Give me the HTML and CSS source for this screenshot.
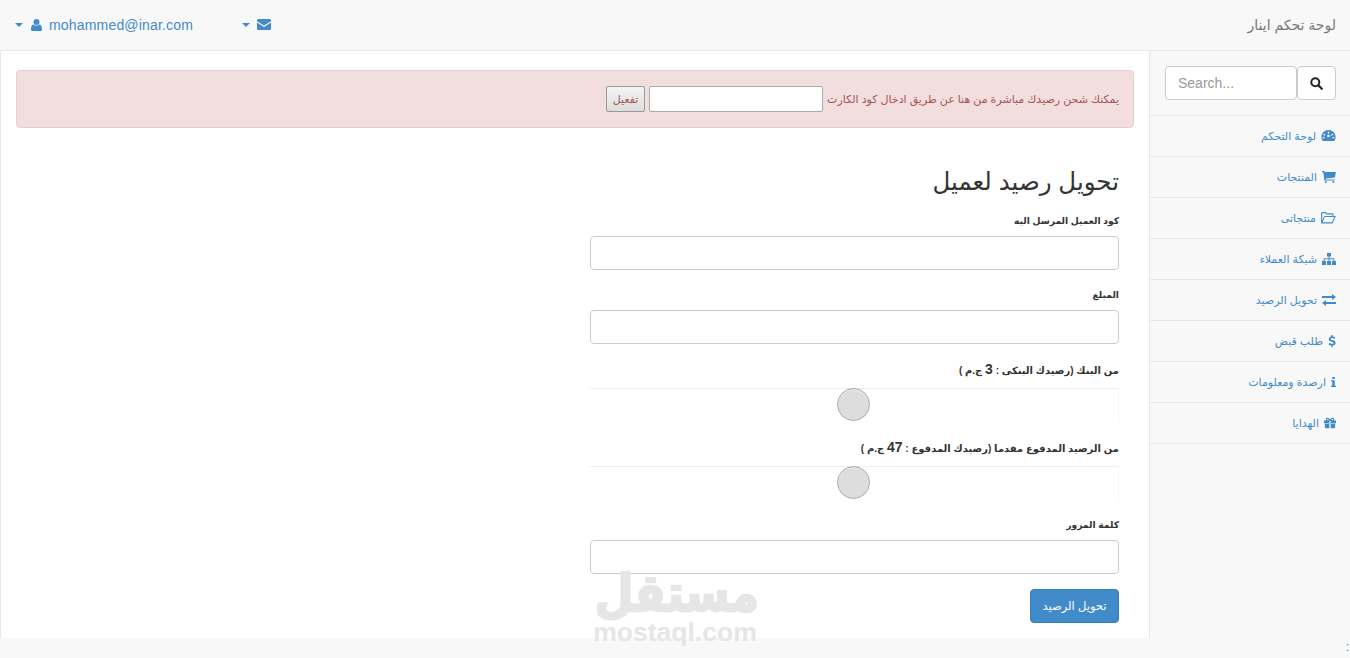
FILE: index.html

```html
<!DOCTYPE html>
<html lang="ar" dir="rtl">
<head>
  <meta charset="utf-8"/>
  <title>لوحة تحكم اينار</title>
  <link rel="stylesheet" href="styles.css">
</head>
<body>
  <nav class="navbar">
    <a class="brand" href="#">لوحة تحكم اينار</a>
    <div class="top-links">
      <a class="top-link" href="#">
        <svg class="ico-env" viewBox="0 0 14 11"><path d="M0 2.2V1a1 1 0 0 1 1-1h12a1 1 0 0 1 1 1v1.2L7 6.6z"/><path d="M0 3.6V10a1 1 0 0 0 1 1h12a1 1 0 0 0 1-1V3.6L7 8z"/></svg>
        <svg class="caret" viewBox="0 0 8 4"><path d="M0 0h8L4 4z"/></svg>
      </a>
      <a class="top-link user-link" href="#">
        <span class="email">mohammed@inar.com</span>
        <svg class="ico-user" viewBox="0 0 11 12"><circle cx="5.5" cy="3" r="3"/><path d="M0 10.4C0 7.8.8 6 2.4 5.6c.8.7 1.9 1.1 3.1 1.1s2.3-.4 3.1-1.1C10.200 6 11 7.800 11 10.400 11 11.400 10.300 12 9.400 12H1.600C.7 12 0 11.400 0 10.400z"/></svg>
        <svg class="caret" viewBox="0 0 8 4"><path d="M0 0h8L4 4z"/></svg>
      </a>
    </div>
  </nav>

  <div class="layout">
    <aside class="sidebar">
      <div class="search-box">
        <div class="search-group">
          <input class="search-input" type="text" placeholder="Search..."/>
          <button class="search-btn" type="button">
            <svg viewBox="0 0 13 13"><circle cx="5.300" cy="5.300" r="4" fill="none" stroke="#222" stroke-width="2"/><path d="M8.300 8.300l3.500 3.500" stroke="#222" stroke-width="2.200" stroke-linecap="round"/></svg>
          </button>
        </div>
      </div>
      <ul class="side-menu">
        <li><a href="#">
          <svg class="ico-wide" viewBox="0 0 14 12"><path fill-rule="evenodd" d="M7 0a7 7 0 0 1 6 10.700c-.2.300-.5.300-.7.300H1.700c-.3 0-.5 0-.7-.3A7 7 0 0 1 7 0zM6.300 1.800v1.800h1.400V1.800zM2.700 3.500l-.9.900 1.300 1.300.9-.9zM11.300 3.500L7.600 7.200a1.300 1.300 0 1 0-1 .1l5.600-2.900zM1.200 7v1.300H3V7zM11 7v1.300h1.800V7z"/></svg>
          <span>لوحة التحكم</span></a></li>
        <li><a href="#">
          <svg viewBox="0 0 14 12"><path d="M0 0h2.400l.4 1H14l-1.200 5.400-9 1 .2 1h8.800v1.200H2.300L1.300 1.200H0z"/><circle cx="3.800" cy="11" r="1"/><circle cx="11.300" cy="11" r="1"/></svg>
          <span>المنتجات</span></a></li>
        <li><a href="#">
          <svg class="ico-wide" viewBox="0 0 15 12"><path fill="none" stroke="#428bca" stroke-width="1.100" d="M.6 10.500V1.500c0-.5.400-.9.900-.9h3.100l1.100 1.300h5.400c.5 0 .9.400.9.900v1.500M.8 10.900l2.500-6c.1-.3.400-.4.700-.4h10l-2.600 6c-.1.300-.4.400-.7.400z"/></svg>
          <span>منتجاتى</span></a></li>
        <li><a href="#">
          <svg viewBox="0 0 14 12"><path d="M5 0h4v3.400H7.500v1.800h4.200c.4 0 .7.300.7.700v2.200H14V12H10V8.100h1.400V6.200H7.500v1.900H9V12H5V8.100h1.500V6.200H2.600v1.900H4V12H0V8.100h1.600V5.900c0-.4.300-.7.700-.7h4.200V3.400H5z"/></svg>
          <span>شبكة العملاء</span></a></li>
        <li><a href="#">
          <svg viewBox="0 0 14 12"><path d="M10 0l4 3-4 3V4H0V2h10zM4 6v2h10v2H4v2L0 9z"/></svg>
          <span>تحويل الرصيد</span></a></li>
        <li><a href="#">
          <svg class="ico-narrow" viewBox="0 0 8 13"><path d="M3.300 0h1.500v1.600c1.100.1 2 .5 2.700 1L6.500 4.200c-.8-.5-1.700-.9-2.500-.9-.9 0-1.400.4-1.400.9 0 .6.600.9 2 1.300 1.900.6 3.300 1.300 3.300 3.100 0 1.500-1.100 2.600-3.100 2.900V13H3.300v-1.500C2 11.400 1 10.900.2 10.200l1.100-1.700c.9.700 1.900 1.200 2.800 1.200 1 0 1.500-.4 1.500-1 0-.6-.6-.9-2.100-1.400C1.700 6.700.500 6 .500 4.400c0-1.400 1.100-2.500 2.800-2.800z"/></svg>
          <span>طلب قبض</span></a></li>
        <li><a href="#">
          <svg class="ico-thin" viewBox="0 0 6 12"><path d="M1.500 0h3v2.400h-3zM0 3.900h4.500v6.500H6V12H0v-1.600h1.500V5.500H0z"/></svg>
          <span>ارصدة ومعلومات</span></a></li>
        <li><a href="#">
          <svg class="ico-gift" viewBox="0 0 14 12"><path d="M0 3.200h5.800v3H0zM8.200 3.200H14v3H8.200zM1 7h4.800v5H2c-.6 0-1-.4-1-1zM8.200 7H13v4c0 .6-.4 1-1 1H8.200zM6.600 3.200h.8V12h-.8z"/><path fill="none" stroke="#428bca" stroke-width="1.200" d="M7 3C6 1 4.800.6 4 .6c-1 0-1.400.7-1.400 1.200C2.600 2.600 3.300 3 4 3zM7 3c1-2 2.200-2.400 3-2.400 1 0 1.400.7 1.400 1.200 0 .8-.7 1.200-1.400 1.200z"/></svg>
          <span>الهدايا</span></a></li>
      </ul>
    </aside>

    <main class="content">
      <div class="alert">
        <span>يمكنك شحن رصيدك مباشرة من هنا عن طريق ادخال كود الكارت</span>
        <input class="card-input" type="text"/>
        <button class="card-btn" type="button">تفعيل</button>
      </div>

      <form class="transfer-form">
        <h2 class="form-title">تحويل رصيد لعميل</h2>
        <div class="form-group">
          <label>كود العميل المرسل اليه</label>
          <input class="form-control" type="text"/>
        </div>
        <div class="form-group">
          <label>المبلغ</label>
          <input class="form-control" type="text"/>
        </div>
        <div class="form-group">
          <label class="balance-label">من البنك (رصيدك البنكى : <b class="num">3</b> ج.م )</label>
          <div class="slider"><span class="knob"></span></div>
        </div>
        <div class="form-group">
          <label class="balance-label">من الرصيد المدفوع مقدما (رصيدك المدفوع : <b class="num">47</b> ج.م )</label>
          <div class="slider"><span class="knob"></span></div>
        </div>
        <div class="form-group">
          <label>كلمة المرور</label>
          <input class="form-control" type="password"/>
        </div>
        <button class="submit-btn" type="button">تحويل الرصيد</button>
      </form>

      <div class="watermark">
        <div class="wm-ar">مستقل</div>
        <div class="wm-en">mostaql.com</div>
      </div>
    </main>
  </div>

  <footer class="footer"><span class="footer-mark">:</span></footer>
</body>
</html>
```

FILE: styles.css

```css
* { box-sizing:border-box; }
html, body { margin:0; padding:0; }
body { background:#f8f8f8; color:#333; font-family:"Liberation Sans", "DejaVu Sans", sans-serif; font-size:14px; overflow:hidden; }
a { text-decoration:none; }

.navbar { height:51px; border-bottom:1px solid #e7e7e7; display:flex; align-items:center; padding:0 14px 1px 15px; }
.brand { color:#777; font-size:14px; }
.top-links { margin-right:auto; display:flex; align-items:center; gap:49px; }
.top-link { display:flex; align-items:center; gap:7px; color:#428bca; }
.user-link { gap:8px; }
.user-link .email { margin-left:-1px; }
.email { direction:ltr; font-size:14px; letter-spacing:.18px; }
.top-link svg { fill:#428bca; display:block; }
.ico-env { width:14px; height:11px; }
.ico-user { width:11px; height:12px; }
.caret { width:8px; height:4px; }

.layout { display:flex; height:587px; }
.sidebar { width:201px; flex:none; border-left:1px solid #e7e7e7; }
.search-box { padding:15px 14px 15px 15px; border-bottom:1px solid #e7e7e7; }
.search-group { display:flex; direction:ltr; height:34px; }
.search-input { width:132px; height:34px; border:1px solid #ccc; border-radius:4px; padding:6px 12px; font:14px "Liberation Sans", sans-serif; color:#555; }
.search-input::placeholder { color:#999; }
.search-btn { width:39px; height:34px; margin:0; padding:0; background:#fff; border:1px solid #ccc; border-radius:4px; display:flex; align-items:center; justify-content:center; }
.search-btn svg { width:13px; height:13px; }

.side-menu { list-style:none; margin:0; padding:0; }
.side-menu li { border-bottom:1px solid #e7e7e7; height:41px; }
.side-menu a { display:flex; align-items:center; gap:5px; height:40px; padding-right:14px; color:#428bca; font-size:11px; }
.side-menu svg { width:14px; height:12px; fill:#428bca; flex:none; }
.side-menu svg.ico-wide { width:15px; }
.side-menu svg.ico-narrow { width:8px; }
.side-menu svg.ico-thin { width:5px; }
.side-menu svg.ico-gift { width:12px; }

.content { flex:1; position:relative; background:#fff; border-left:1px solid #e7e7e7; padding:19px 15px 0; }

.alert { height:58px; background:#f2dede; border:1px solid #ebccd1; border-radius:4px; color:#a65553; font-size:11px; display:flex; align-items:center; padding:0 14px; }
.card-input { width:174px; height:26px; margin:0 4px; background:#fff; border:1px solid #aaa; border-radius:2px; }
.card-btn { width:39px; height:26px; padding:0; color:#a65553; font:11px "Liberation Sans", "DejaVu Sans", sans-serif; border:1px solid #999; border-radius:2px; background:linear-gradient(#f4f4f4, #ddd); }

.transfer-form { width:529px; margin-right:15px; padding-top:37px; }
.form-title { margin:0 0 13px; font-size:24.500px; line-height:33px; font-weight:500; color:#333; }
.form-group { margin-bottom:15px; }
.form-group label { display:block; height:20px; line-height:20px; margin-bottom:5px; font-size:9.2px; font-weight:700; color:#333; }
.form-group .balance-label { font-size:10px; }
.num { font-size:14px; }
.form-control { display:block; width:100%; height:34px; background:#fff; border:1px solid #ccc; border-radius:4px; }

.slider { position:relative; height:38px; padding-top:4px; }
.slider::before { content:""; display:block; height:34px; border-top:1px solid #eee; border-right:1px solid #f6f6f6; }
.knob { position:absolute; top:4px; left:247px; width:33px; height:33px; border-radius:50%; background:#ddd; border:1px solid #aaa; box-shadow:inset 0 1px 2px #eee; }

.submit-btn { display:block; width:89px; height:34px; padding:0; background:#428bca; color:#fff; border:1px solid #357ebd; border-radius:4px; font:11.5px "Liberation Sans", "DejaVu Sans", sans-serif; }

.watermark { position:absolute; left:592px; top:518px; width:164px; text-align:center; color:#e6e6e6; font-weight:700; pointer-events:none; }
.wm-ar { font-size:45px; line-height:50px; -webkit-text-stroke:2px #e6e6e6; transform:translateX(2px) scaleY(1.150); }
.wm-en { direction:ltr; font-size:26.5px; line-height:26px; white-space:nowrap; }

.footer { height:20px; display:flex; justify-content:flex-end; direction:ltr; }
.footer-mark { color:#428bca; font-size:12px; line-height:14px; padding:2px 1px 0 0; }
```
